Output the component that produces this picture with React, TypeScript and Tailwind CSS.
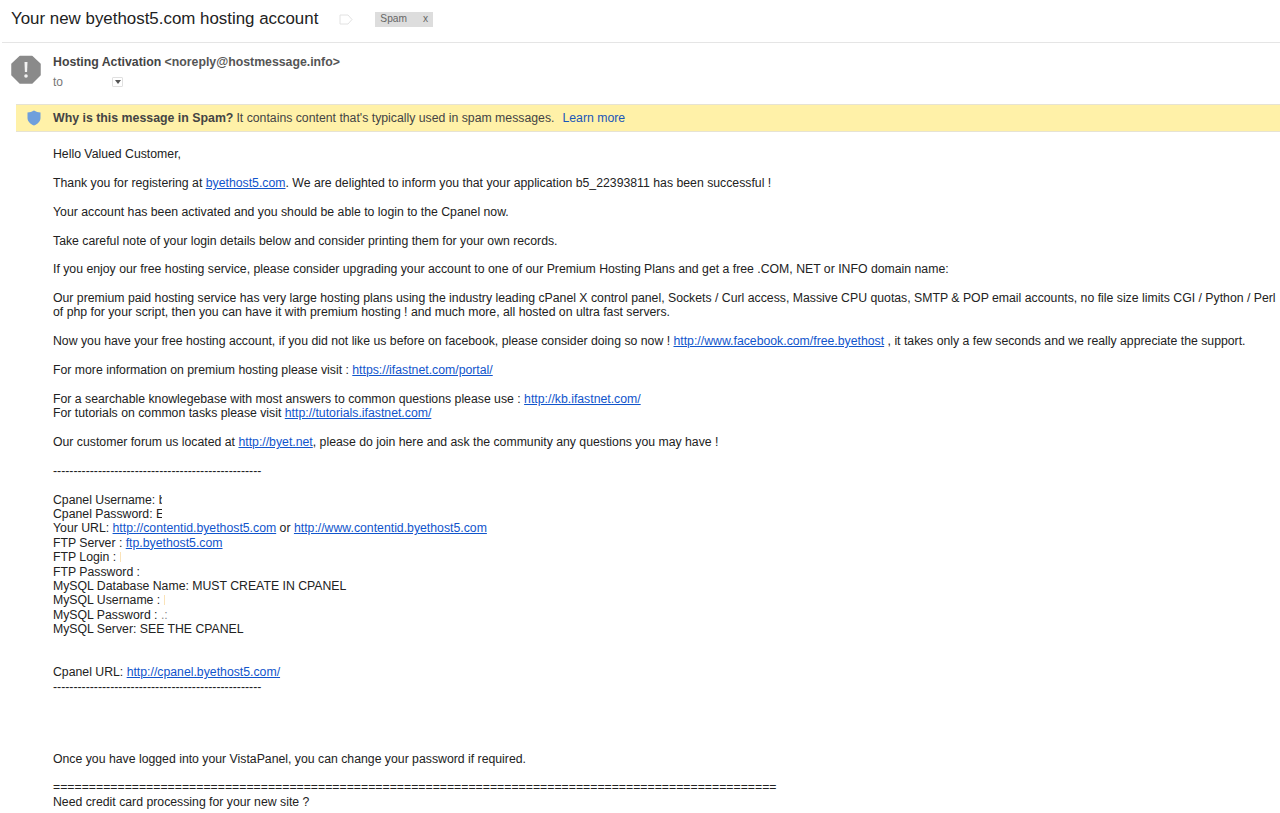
import React from "react";

const L = ({ children }: { children: React.ReactNode }) => (
  <a className="text-[#1155cc] underline">{children}</a>
);

function Line({ children }: { children?: React.ReactNode }) {
  return <div className="h-[14.4px] whitespace-nowrap">{children}</div>;
}

const Mark = () => <span className="inline-block h-[10px] w-[1px] bg-[#fbe3b8] align-[-1px]" />;

export default function App() {
  return (
    <div className="w-[1280px] h-[813px] overflow-hidden bg-white font-['Liberation_Sans',Arial,sans-serif] text-[#222222]">
      <div className="flex items-center h-[38px] pl-[11px]">
        <h1 className="text-[16.9px] leading-[38px] font-normal text-[#222]">Your new byethost5.com hosting account</h1>
        <svg className="ml-[21px]" width="14" height="11" viewBox="0 0 14 11" fill="none">
          <path d="M1 1H9L13 5.5L9 10H1Z" stroke="#e2e2e2" fill="#fff" />
        </svg>
        <span className="ml-[22px] flex h-[15px] w-[58px] items-center bg-[#dddddd] pl-[5px] text-[10.2px] text-[#666]">
          Spam<span className="ml-[16px]">x</span>
        </span>
      </div>
      <div className="ml-[2px] h-[1px] bg-[#e5e5e5] mt-[4px]" />
      <div className="flex pl-[11px] pt-[10px] h-[61px]">
        <svg width="30" height="30" viewBox="0 0 30 30" className="mt-[2px]">
          <path d="M9 1.5H21L29 9V20L21 28H9L1 20V9Z" fill="#8a8a8a" stroke="#8a8a8a" strokeWidth="1.5" strokeLinejoin="round" />
          <path d="M13.5 7H16.5L16.1 17H13.9Z" fill="#f2f2f2" />
          <circle cx="15" cy="21" r="1.8" fill="#f2f2f2" />
        </svg>
        <div className="ml-[12px]">
          <div className="text-[12.3px] leading-[16px] mt-[1px] font-bold text-[#444]">
            Hosting Activation <span className="text-[#555]">&lt;noreply@hostmessage.info&gt;</span>
          </div>
          <div className="flex items-center mt-[4px] text-[12px] leading-[16px] text-[#777]">
            to
            <span className="ml-[49px] flex h-[10px] w-[11px] items-center justify-center rounded-[1px] border border-[#e0e0e0] bg-white">
              <svg width="6" height="4" viewBox="0 0 6 4"><path d="M0 0H6L3 4Z" fill="#555" /></svg>
            </span>
          </div>
        </div>
      </div>
      <div className="ml-[16px] flex h-[28px] items-center border-y border-[#e6e3d4] bg-[#fff1a8] text-[12.28px]">
        <svg className="ml-[11px]" width="14" height="16" viewBox="0 0 14 16">
          <path d="M7 0.5C9 1.8 11 2.4 13.5 2.5V8C13.5 11.5 10.5 14.2 7 15.5C3.5 14.2 0.5 11.5 0.5 8V2.5C3 2.4 5 1.8 7 0.5Z" fill="#6f9fdc" />
        </svg>
        <span className="ml-[12px] font-bold text-[12.35px] text-[#444]">Why is this message in Spam?</span>
        <span className="ml-[3px] text-[#444]">It contains content that's typically used in spam messages.</span>
        <span className="ml-[8px] text-[#1a56b8]">Learn more</span>
      </div>
      <div className="pl-[53px] pt-[15.2px] text-[12.28px] leading-[14.4px]">
        <Line>Hello Valued Customer,</Line>
        <Line />
        <Line>Thank you for registering at <L>byethost5.com</L>. We are delighted to inform you that your application b5_22393811 has been successful !</Line>
        <Line />
        <Line>Your account has been activated and you should be able to login to the Cpanel now.</Line>
        <Line />
        <Line>Take careful note of your login details below and consider printing them for your own records.</Line>
        <Line />
        <Line>If you enjoy our free hosting service, please consider upgrading your account to one of our Premium Hosting Plans and get a free .COM, NET or INFO domain name:</Line>
        <Line />
        <Line>Our premium paid hosting service has very large hosting plans using the industry leading cPanel X control panel, Sockets / Curl access, Massive CPU quotas, SMTP &amp; POP email accounts, no file size limits CGI / Python / Perl</Line>
        <Line>of php for your script, then you can have it with premium hosting ! and much more, all hosted on ultra fast servers.</Line>
        <Line />
        <Line>Now you have your free hosting account, if you did not like us before on facebook, please consider doing so now ! <L>http://www.facebook.com/free.byethost</L> , it takes only a few seconds and we really appreciate the support.</Line>
        <Line />
        <Line>For more information on premium hosting please visit : <L>https://ifastnet.com/portal/</L></Line>
        <Line />
        <Line>For a searchable knowlegebase with most answers to common questions please use : <L>http://kb.ifastnet.com/</L></Line>
        <Line>For tutorials on common tasks please visit <L>http://tutorials.ifastnet.com/</L></Line>
        <Line />
        <Line>Our customer forum us located at <L>http://byet.net</L>, please do join here and ask the community any questions you may have !</Line>
        <Line />
        <Line>---------------------------------------------------</Line>
        <Line />
        <Line>Cpanel Username: <span className="inline-block w-[3px] overflow-hidden align-bottom">b</span></Line>
        <Line>Cpanel Password: <span className="inline-block w-[6px] overflow-hidden align-bottom">E</span></Line>
        <Line>Your URL: <L>http://contentid.byethost5.com</L> or <L>http://www.contentid.byethost5.com</L></Line>
        <Line>FTP Server : <L>ftp.byethost5.com</L></Line>
        <Line>FTP Login : <Mark /></Line>
        <Line>FTP Password :</Line>
        <Line>MySQL Database Name: MUST CREATE IN CPANEL</Line>
        <Line>MySQL Username : <Mark /></Line>
        <Line>MySQL Password : <span className="text-[#888]">.:</span></Line>
        <Line>MySQL Server: SEE THE CPANEL</Line>
        <Line />
        <Line />
        <Line>Cpanel URL: <L>http://cpanel.byethost5.com/</L></Line>
        <Line>---------------------------------------------------</Line>
        <Line />
        <Line />
        <Line />
        <Line />
        <Line>Once you have logged into your VistaPanel, you can change your password if required.</Line>
        <Line />
        <Line>=====================================================================================================</Line>
        <Line>Need credit card processing for your new site ?</Line>
      </div>
    </div>
  );
}
